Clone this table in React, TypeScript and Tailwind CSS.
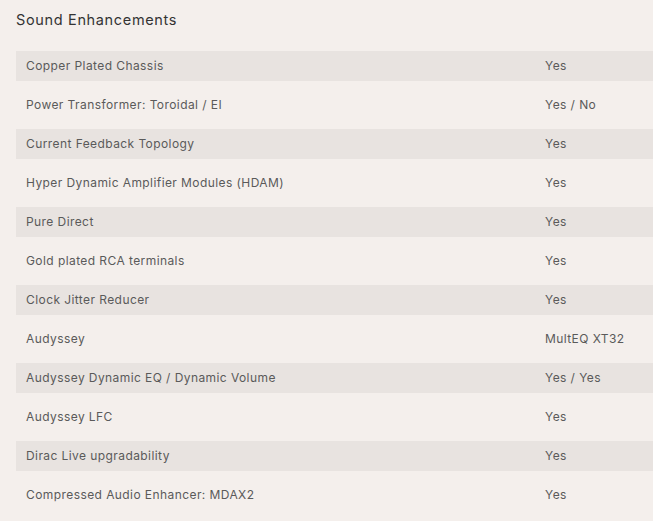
const rows: [string, string][] = [
  ["Copper Plated Chassis", "Yes"],
  ["Power Transformer: Toroidal / EI", "Yes / No"],
  ["Current Feedback Topology", "Yes"],
  ["Hyper Dynamic Amplifier Modules (HDAM)", "Yes"],
  ["Pure Direct", "Yes"],
  ["Gold plated RCA terminals", "Yes"],
  ["Clock Jitter Reducer", "Yes"],
  ["Audyssey", "MultEQ XT32"],
  ["Audyssey Dynamic EQ / Dynamic Volume", "Yes / Yes"],
  ["Audyssey LFC", "Yes"],
  ["Dirac Live upgradability", "Yes"],
  ["Compressed Audio Enhancer: MDAX2", "Yes"],
];

export default function App() {
  return (
    <div className="min-h-[521px] w-[653px] overflow-hidden bg-[#f4efec] font-['Inter',sans-serif]">
      <h2 className="pl-4 pt-[10px] text-[14.5px] leading-5 tracking-[0.045em] text-[#333]">
        Sound Enhancements
      </h2>
      <div className="mt-[21px] flex flex-col gap-[9px] pl-4">
        {rows.map(([label, value], i) => (
          <div
            key={label}
            className={`flex h-[30px] items-center text-[12px] tracking-[0.035em] text-[#5a5a5a] ${
              i % 2 === 0 ? "bg-[#e8e3e0]" : ""
            }`}
          >
            <span className="w-[529px] pl-[10px]">{label}</span>
            <span>{value}</span>
          </div>
        ))}
      </div>
    </div>
  );
}
